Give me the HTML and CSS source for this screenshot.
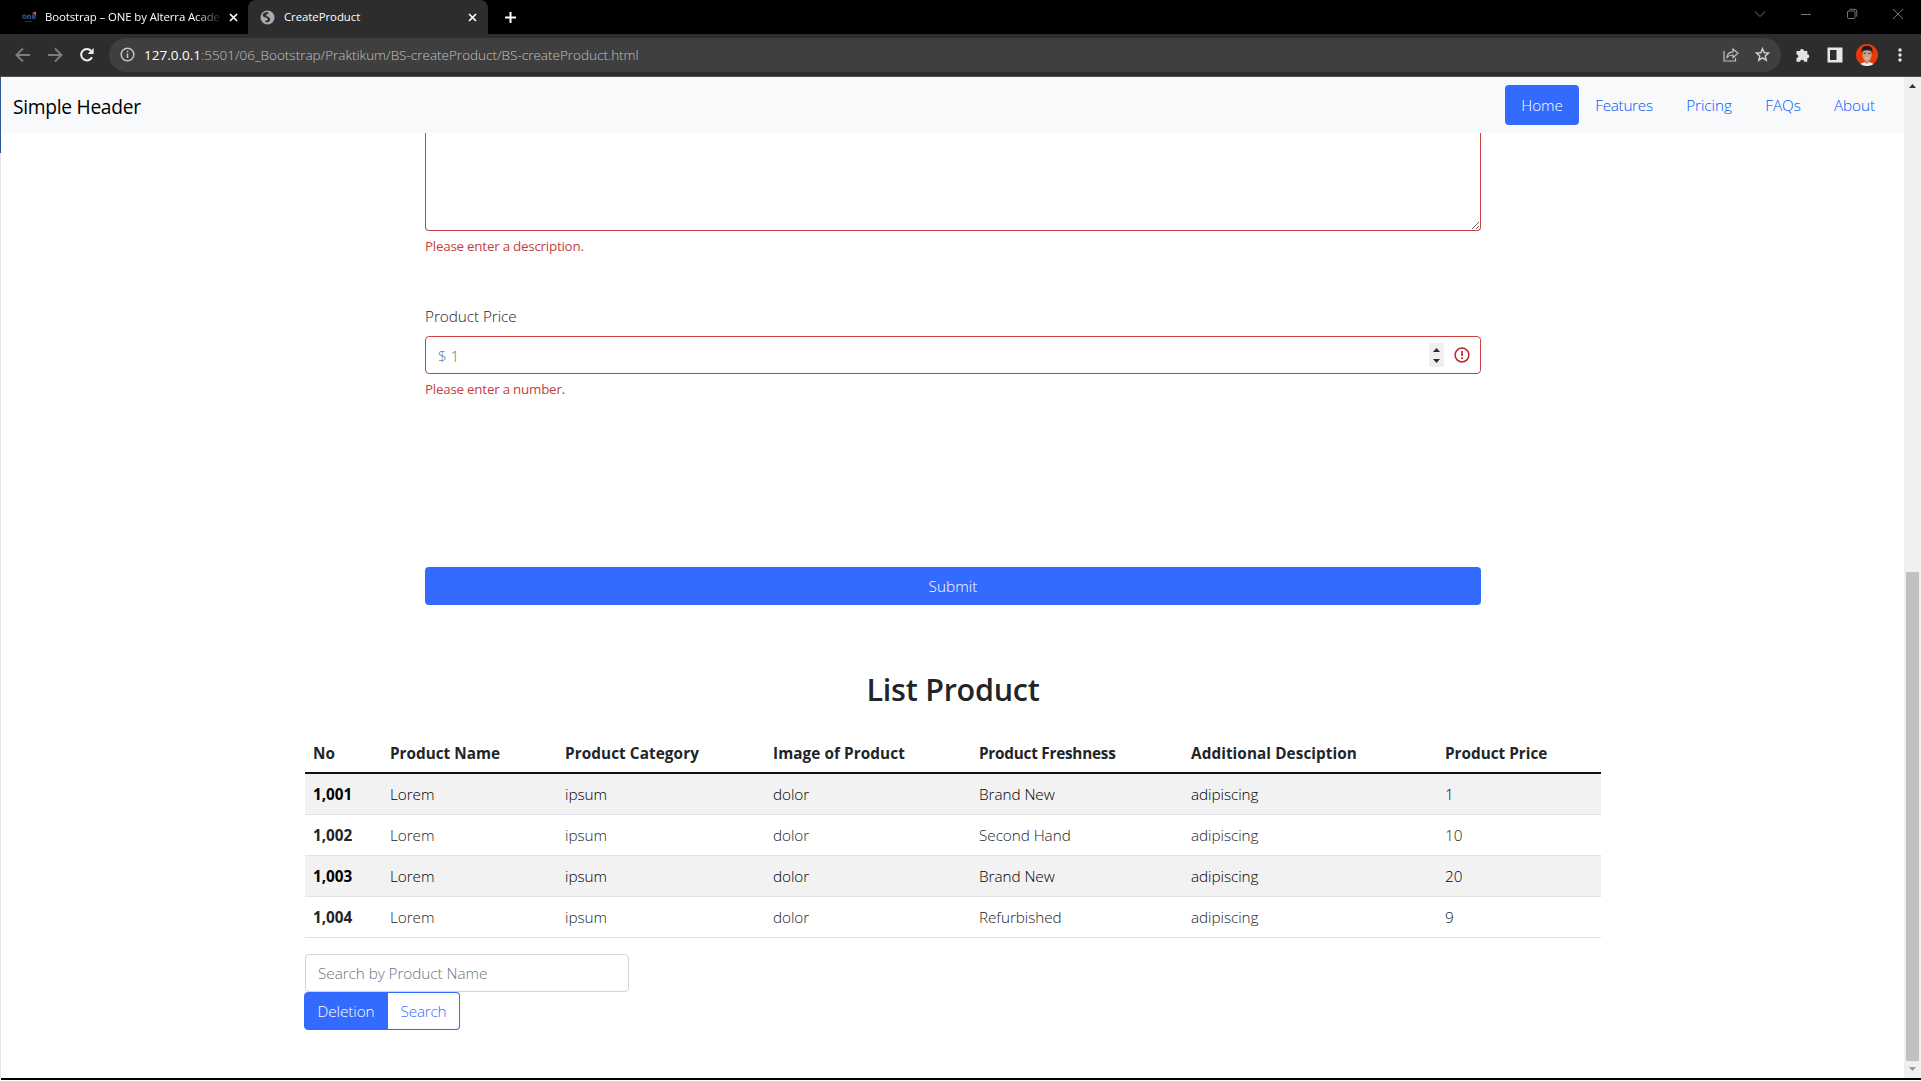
FILE: index.html
```
<!DOCTYPE html>
<html lang="en">
<head>
<meta charset="utf-8">
<title>CreateProduct</title>
<link rel="stylesheet" href="styles.css">
</head>
<body>
<div class="tabstrip">
  <div class="tab tab-first">
    <svg class="favicon-one" width="15" height="12" viewBox="0 0 15 12" fill="none"><g stroke="#2b4a86" stroke-width="1.4"><circle cx="2.3" cy="5.6" r="1.7"/><path d="M5.7 8V4.2M5.7 5.2q2.4-2 2.6.4V8"/><path d="M10.2 5.9h3.2q-.2-2.2-1.7-2-1.6.2-1.5 2 .3 2 3 1.5"/></g><path d="M9.5 2.2 14 .4v4.2l-1.6-1.7z" fill="#e2661d"/><path d="M3 10.5h7" stroke="#333" stroke-width="1"/></svg>
    <span class="tab-title tab-title-fade">Bootstrap – ONE by Alterra Acade</span>
    <svg class="tab-close" width="9" height="9" viewBox="0 0 9 9"><path d="M1 1l7 7M8 1 1 8" stroke="#fff" stroke-width="1.7"/></svg>
  </div>
  <div class="tab tab-active">
    <svg class="globe" width="15" height="15" viewBox="0 0 15 15"><circle cx="7.500" cy="7.500" r="7" fill="#a5aab0"/><path d="M2.500 5q.5 2.300 2.800 2.500 2.500.2 2.400 1.800-.2 1.500-2.700 1.700l1 1.300q3.500.4 4.200-2.300.3-2.500-2.200-3.200Q6 6.200 6.200 4.700q.3-1.200 2.600-1.300L8 2Q4 1.800 2.500 5z" fill="#2d2d2d"/></svg>
    <span class="tab-title">CreateProduct</span>
    <svg class="tab-close" width="9" height="9" viewBox="0 0 9 9"><path d="M1 1l7 7M8 1 1 8" stroke="#fff" stroke-width="1.7"/></svg>
  </div>
  <svg class="new-tab" width="13" height="13" viewBox="0 0 13 13"><path d="M6.500 1v11M1 6.500h11" stroke="#fff" stroke-width="2"/></svg>
  <div class="window-controls">
    <svg width="12" height="12" viewBox="0 0 12 12"><path d="M1 3.500l5 5 5-5"/></svg>
    <svg width="12" height="12" viewBox="0 0 12 12"><path d="M1 6.500h10"/></svg>
    <svg width="12" height="12" viewBox="0 0 12 12"><rect x="1.500" y="3" width="7.500" height="7.500" rx="1"/><path d="M3.500 1.300h5.500q1.800 0 1.800 1.800v5.500"/></svg>
    <svg width="12" height="12" viewBox="0 0 12 12"><path d="M1 1l10 10M11 1 1 11"/></svg>
  </div>
</div>

<div class="toolbar">
  <svg class="nav-icon" width="16" height="16" viewBox="0 0 16 16" stroke="#7d7d7d"><path d="M15 8H2M8 1.500 1.500 8 8 14.500"/></svg>
  <svg class="nav-icon" width="16" height="16" viewBox="0 0 16 16" stroke="#7d7d7d"><path d="M1 8h13M8 1.500 14.500 8 8 14.500"/></svg>
  <svg class="nav-icon" width="16" height="16" viewBox="0 0 16 16"><path d="M13 10.200A5.700 5.700 0 1 1 12.200 4" stroke="#eee" stroke-width="2"/><path d="M14.600 1v6H8.600z" fill="#eee"/></svg>
  <div class="omnibox">
    <svg width="15" height="15" viewBox="0 0 15 15" fill="none" stroke="#c4c7c9" stroke-width="1.500"><circle cx="7.500" cy="7.500" r="6.300"/><path d="M7.500 6.500v4.500M7.500 3.800v1.500"/></svg>
    <span class="url"><span class="url-host">127.0.0.1</span>:5501/06_Bootstrap/Praktikum/BS-createProduct/BS-createProduct.html</span>
    <svg class="share" width="16" height="15" viewBox="0 0 16 15" fill="none" stroke="#c4c4c4" stroke-width="1.200"><path d="M1 4v10h11.500v-3"/><path d="M4 10.500q.2-5.200 6-5.600V2l5 4.300-5 4.300V8q-4-.2-6 2.500z"/></svg>
    <svg class="star" width="15" height="15" viewBox="0 0 16 16" fill="none" stroke="#d2d2d2" stroke-width="1.500"><path d="m8 1.800 1.800 4.300 4.700.4-3.600 3 1.100 4.600L8 11.600l-4 2.500 1.100-4.600-3.600-3 4.700-.4z"/></svg>
  </div>
  <div class="actions">
    <svg width="16" height="16" viewBox="0 0 16 16" fill="#e3e3e3"><path d="M1.500 4H5a2 2 0 1 1 4 0h3.300v3.300a2 2 0 1 1 0 4v3.500H9.100a2 2 0 0 0-4 0H1.500v-3.800a1.800 1.800 0 0 0 0-3.600z"/></svg>
    <svg width="16" height="16" viewBox="0 0 16 16"><rect x=".5" y=".5" width="15" height="15" fill="#e8e8e8"/><rect x="3" y="3" width="6.500" height="10" fill="#2d2d2d"/></svg>
    <svg width="22" height="22" viewBox="0 0 22 22"><clipPath id="face"><circle cx="11" cy="11" r="11"/></clipPath><g clip-path="url(#face)"><path fill="#e83a08" d="M0 0h22v22H0z"/><path d="M3 22q2-4 8-4t8 4z" fill="#eef0f5"/><path d="M8.800 14h4.400v4.300L11 20l-2.200-1.700z" fill="#b98b73"/><ellipse cx="11" cy="11" rx="4.600" ry="6.200" fill="#c9a18b"/><path d="M5.600 9.500Q4.300 1.800 11 1.800t5.400 7.700l-1.200-2.700Q11 5.800 6.800 6.800z" fill="#17201f"/><path d="M7.700 9.300h2.100m2.400 0h2.100" stroke="#402a22"/><path d="M9.500 14h3" stroke="#efe0d8" stroke-width=".8"/></g></svg>
    <svg width="4" height="14" viewBox="0 0 4 14" fill="#e8e8e8"><circle cx="2" cy="2" r="1.700"/><circle cx="2" cy="7" r="1.700"/><circle cx="2" cy="12" r="1.700"/></svg>
  </div>
</div>

<div class="viewport">
  <div class="window-edge"><div class="edge-dark"></div></div>
  <div class="page">
    <header class="header">
      <a class="brand">Simple Header</a>
      <nav class="pills">
        <a class="pill pill-home">Home</a>
        <a class="pill pill-features">Features</a>
        <a class="pill pill-pricing">Pricing</a>
        <a class="pill pill-faqs">FAQs</a>
        <a class="pill pill-about">About</a>
      </nav>
    </header>
    <main>
      <form class="product-form">
        <textarea class="control description" aria-label="Additional description"></textarea>
        <div class="invalid">Please enter a description.</div>
        <label class="label" for="price">Product Price</label>
        <div class="control price-box">
          <input class="price" id="price" placeholder="$ 1">
          <svg class="spinner" width="15" height="24" viewBox="0 0 15 24"><path fill="#efefef" d="M0 0h15v24H0z"/><path d="M7.500 5 11 9H4zM7.500 20 4 16h7z" fill="#2b2b2b"/></svg>
          <svg class="alert" width="16" height="16" viewBox="0 0 16 16" fill="none" stroke="#c0282b"><circle cx="8" cy="8" r="6.900" stroke-width="1.500"/><path d="M8 4v5M8 10.300v1.700" stroke-width="1.700"/></svg>
        </div>
        <div class="invalid">Please enter a number.</div>
        <button class="submit" type="button">Submit</button>
      </form>
      <section class="products">
        <h2 class="title">List Product</h2>
        <table class="table">
          <colgroup><col class="c-no"><col class="c-name"><col class="c-category"><col class="c-image"><col class="c-fresh"><col class="c-desc"><col class="c-price"></colgroup>
          <thead><tr><th>No</th><th>Product Name</th><th class="wide">Product Category</th><th class="wide">Image of Product</th><th class="tight">Product Freshness</th><th class="wide">Additional Desciption</th><th>Product Price</th></tr></thead>
          <tbody>
            <tr><th>1,001</th><td>Lorem</td><td>ipsum</td><td>dolor</td><td>Brand New</td><td>adipiscing</td><td>1</td></tr>
            <tr><th>1,002</th><td>Lorem</td><td>ipsum</td><td>dolor</td><td>Second Hand</td><td>adipiscing</td><td>10</td></tr>
            <tr><th>1,003</th><td>Lorem</td><td>ipsum</td><td>dolor</td><td>Brand New</td><td>adipiscing</td><td>20</td></tr>
            <tr><th>1,004</th><td>Lorem</td><td>ipsum</td><td>dolor</td><td>Refurbished</td><td>adipiscing</td><td>9</td></tr>
          </tbody>
        </table>
        <input class="search" placeholder="Search by Product Name">
        <div class="btn-group">
          <button class="btn btn-delete" type="button">Deletion</button>
          <button class="btn btn-search" type="button">Search</button>
        </div>
      </section>
    </main>
  </div>
  <div class="scrollbar">
    <svg width="17" height="17" viewBox="0 0 17 17"><path d="M8.500 7 12 11H5z" fill="#333"/></svg>
    <div class="thumb"></div>
    <svg width="17" height="17" viewBox="0 0 17 17"><path d="M8.500 10 5 6h7z" fill="#999"/></svg>
  </div>
</div>
<div class="taskbar-edge"></div>
</body>
</html>
```
FILE: styles.css
```
* { box-sizing: border-box; }

body {
  margin: 0;
  height: 1081px;
  display: flex;
  flex-direction: column;
  overflow: hidden;
  background: #fff;
  color: #212529;
  font: 340 15.3px/24px "Open Sans", "Noto Sans", sans-serif;
  letter-spacing: -.06px;
}

svg { display: block; flex: none; }
input, textarea, button { font: inherit; letter-spacing: inherit; color: inherit; margin: 0; outline: 0; }

/* Browser tabs */
.tabstrip { display: flex; height: 34px; background: #000; }
.tab { display: flex; align-items: center; height: 34px; font-size: 11.4px; font-weight: 400; letter-spacing: -.05px; color: #fff; }
.tab-first { width: 248px; padding: 0 10px 0 22px; }
.tab-active { width: 240px; padding: 0 11px 0 12px; background: #2d2d2d; border-radius: 8px 8px 0 0; }
.tab-title { flex: 1; white-space: nowrap; line-height: 20px; }
.favicon-one { margin-right: 8px; }
.globe { margin-right: 9px; }
.tab-title-fade { letter-spacing: -.1px; -webkit-mask-image: linear-gradient(90deg, #000 150px, transparent 178px); mask-image: linear-gradient(90deg, #000 150px, transparent 178px); }
.new-tab { margin: 11px 0 0 16px; }
.window-controls { display: flex; gap: 34px; margin: 8px 17px 0 auto; }
.window-controls svg { fill: none; stroke: #777; stroke-width: 1; }

/* Browser toolbar */
.toolbar { display: flex; align-items: center; height: 43px; padding: 0 19px 1px 15px; background: #2d2d2d; border-bottom: 1px solid #505050; }
.nav-icon { fill: none; stroke-width: 1.9; margin-right: 16px; }
.omnibox { display: flex; align-items: center; width: 1672px; height: 34px; padding: 0 11px; margin-left: -2px; border-radius: 17px; background: #3f3f3f; }
.url { margin-left: 9px; font-size: 13.5px; letter-spacing: 0; color: #c2c2c2; white-space: nowrap; }
.url-host { color: #fff; font-weight: 400; }
.share { margin-left: auto; margin-right: 16px; }
.star { margin-right: 0; }
.actions { display: flex; align-items: center; flex: 1; gap: 16px; margin-left: 14px; }
.actions svg:nth-child(3) { margin-left: -3px; }
.actions svg:nth-child(4) { margin-left: 4px; }

/* Scrolled page area */
.viewport { display: flex; height: 1001px; }
.window-edge { width: 1px; background: #e6e6e6; }
.edge-dark { height: 76px; background: #2b579a; }
.page { width: 1903px; }

.header { display: flex; justify-content: space-between; height: 56px; padding: 8px 12px; background: #f8f9fa; }
.brand { padding-top: 10px; font-size: 19.2px; font-weight: 400; letter-spacing: -.28px; line-height: 24px; color: #000; }
.pills { display: flex; }
.pill { height: 40px; line-height: 40px; border-radius: 4px; text-align: center; color: #0055fa; }
.pill-home { width: 74px; background: #346bff; color: #fff; letter-spacing: -.1px; }
.pill-features { width: 90px; letter-spacing: -.3px; }
.pill-pricing { width: 80px; }
.pill-faqs { width: 68px; }
.pill-about { width: 75px; }

/* Product form */
.product-form { width: 1056px; margin-left: 424px; }
.control { display: block; width: 100%; border: 1px solid #c9433f; background: #fff; }
.description { height: 98px; border-top: 0; border-radius: 0 0 4px 4px; resize: vertical; }
.invalid { margin-top: 5px; font-size: 13.4px; line-height: 21px; font-weight: 400; letter-spacing: -.24px; color: #c43f41; }
.label { display: block; margin: 47px 0 8px; }
.price-box { display: flex; align-items: center; height: 38px; padding: 0 10px 0 12px; border-radius: 4px; }
.price { flex: 1; height: 26px; border: 0; padding: 1px 0 0; background: transparent; }
.price::placeholder, .search::placeholder { color: #6c757d; opacity: 1; }
.alert { margin-left: 10px; }
.submit { display: block; width: 100%; height: 38px; margin-top: 167px; padding: 0 0 1px; border: 0; border-radius: 4px; background: #346bff; color: #fff; letter-spacing: .05px; }

/* Product list */
.products { width: 1296px; margin-left: 304px; }
.title { margin: 65px 0 24px; font-size: 30.5px; line-height: 38px; font-weight: 600; letter-spacing: -.25px; text-align: center; }
.table { width: 1296px; table-layout: fixed; border-collapse: separate; border-spacing: 0; }
.c-no { width: 77px; }
.c-name { width: 175px; }
.c-category { width: 208px; }
.c-image { width: 206px; }
.c-fresh { width: 212px; }
.c-desc { width: 254px; }
.c-price { width: 164px; }
.table th, .table td { height: 41px; padding: 0 8px; text-align: left; border-bottom: 1px solid #dee2e6; }
.table th { font-weight: 700; letter-spacing: 0; }
.table thead th { height: 42px; padding-top: 1px; border-bottom: 2px solid #101214; }
.table thead .tight { letter-spacing: -.24px; }
.table thead .wide { letter-spacing: .08px; }
.table tbody tr:nth-child(odd) { background: #f2f2f2; color: #000; }
.search { display: block; width: 324px; height: 38px; margin-top: 16px; padding: 0 12px; border: 1px solid #ced4da; border-radius: 4px; }
.btn-group { display: flex; margin-left: -1px; }
.btn { height: 38px; padding: 0 0 1px; border: 1px solid #346bff; }
.btn-delete { width: 84px; border-radius: 4px 0 0 4px; background: #346bff; color: #fff; }
.btn-search { width: 72px; border-left: 0; border-radius: 0 4px 4px 0; background: #fff; color: #346bff; letter-spacing: -.2px; }

.scrollbar { display: flex; flex-direction: column; width: 17px; background: #f0f0f0; }
.thumb { width: 13px; height: 489px; margin: auto 2px 0; background: #c1c1c1; }
.taskbar-edge { height: 2px; margin-left: 1px; background: #000; }
```
